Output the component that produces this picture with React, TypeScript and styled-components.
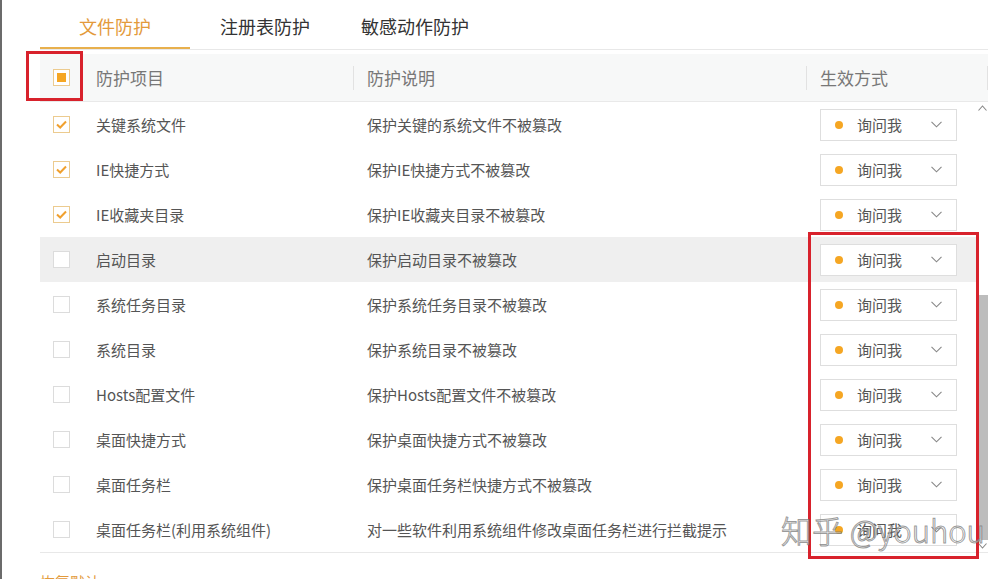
import React from "react";
import styled, { createGlobalStyle } from "styled-components";

const Global = createGlobalStyle`
  html, body { margin: 0; padding: 0; background: #fff; }
  body { font-family: "Noto Sans CJK SC", "Microsoft YaHei", "Noto Sans", sans-serif; }
  #root { width: 1007px; height: 579px; overflow: hidden; }
`;

const Frame = styled.div`
  position: relative;
  width: 1007px;
  height: 579px;
  box-sizing: border-box;
  border-left: 2px solid #6b6b6b;
  padding-left: 38px;
  overflow: hidden;
  background: #fff;
`;

const Panel = styled.div`
  width: 948px;
  display: flex;
  flex-direction: column;
`;

const TabBar = styled.div`
  display: flex;
  height: 49px;
  border-bottom: 1px solid #e8e8e8;
`;

const Tab = styled.div<{ $active?: boolean }>`
  width: 150px;
  height: 49px;
  box-sizing: border-box;
  display: flex;
  align-items: center;
  justify-content: center;
  padding-top: 4px;
  font-size: 18px;
  color: ${(p) => (p.$active ? "#e39a3b" : "#333")};
  border-bottom: 2px solid ${(p) => (p.$active ? "#e8b04d" : "transparent")};
`;

const Header = styled.div`
  margin-top: 4px;
  height: 47px;
  background: #f7f8f8;
  border-bottom: 1px solid #e9e9e9;
  display: grid;
  grid-template-columns: 313px 453px 182px;
  align-items: center;
`;

const HeadCell = styled.div<{ $sep?: boolean }>`
  display: flex;
  align-items: center;
  height: 24px;
  font-size: 17px;
  color: #777;
  padding-left: 13px;
  border-left: ${(p) => (p.$sep ? "1px solid #e2e2e2" : "none")};
  gap: 26px;
  &:last-child { border-right: 1px solid #e2e2e2; }
`;

const Body = styled.div`
  position: relative;
  height: 450px;
  border-bottom: 1px solid #e8e8e8;
  display: flex;
`;

const Rows = styled.div`
  width: 937px;
  display: flex;
  flex-direction: column;
`;

const Row = styled.div<{ $hover?: boolean }>`
  height: 45px;
  display: grid;
  grid-template-columns: 313px 453px 171px;
  align-items: center;
  background: ${(p) => (p.$hover ? "#efefef" : "transparent")};
  font-size: 15px;
  color: #555;
`;

const NameCell = styled.div`
  display: flex;
  align-items: center;
  padding-left: 13px;
  gap: 26px;
`;

const DescCell = styled.div`
  padding-left: 14px;
  white-space: nowrap;
`;

const ModeCell = styled.div`
  padding-left: 14px;
`;

const Box = styled.div<{ $checked?: boolean; $partial?: boolean }>`
  width: 17px;
  height: 17px;
  box-sizing: border-box;
  border: 1px solid ${(p) => (p.$checked || p.$partial ? "#eccb8f" : "#dcdcdc")};
  background: #fff;
  display: flex;
  align-items: center;
  justify-content: center;
  flex: none;
`;

const Inner = styled.div`
  width: 9px;
  height: 9px;
  background: #f5a623;
`;

const Select = styled.div`
  width: 137px;
  height: 32px;
  box-sizing: border-box;
  border: 1px solid #dedede;
  background: #fff;
  display: flex;
  align-items: center;
  padding-left: 14px;
  padding-right: 14px;
  font-size: 15px;
  color: #555;
`;

const Dot = styled.span`
  width: 8px;
  height: 8px;
  border-radius: 50%;
  background: #f5a623;
  margin-right: 14px;
  flex: none;
`;

const SelText = styled.span`
  flex: 1;
`;

const Scroll = styled.div`
  width: 11px;
  display: flex;
  flex-direction: column;
  align-items: center;
`;

const Track = styled.div`
  flex: 1;
  width: 11px;
  display: flex;
  flex-direction: column;
  justify-content: flex-end;
`;

const Thumb = styled.div`
  width: 11px;
  height: 245px;
  background: #bdbdbd;
`;

const Arrow = styled.div`
  height: 12px;
  display: flex;
  align-items: center;
  justify-content: center;
`;

const Footer = styled.div`
  margin-top: 18px;
  font-size: 15px;
  color: #e39a3b;
`;

const Mark = styled.div<{ $x: number; $y: number; $w: number; $h: number }>`
  position: absolute;
  left: ${(p) => p.$x}px;
  top: ${(p) => p.$y}px;
  width: ${(p) => p.$w}px;
  height: ${(p) => p.$h}px;
  box-sizing: border-box;
  border: 3px solid #d8222c;
  pointer-events: none;
`;

const Watermark = styled.div`
  position: absolute;
  left: 779px;
  top: 507px;
  font-size: 31px;
  font-family: "Noto Sans CJK SC", "Noto Sans", sans-serif;
  font-weight: 300;
  color: rgba(255, 255, 255, 0.55);
  -webkit-text-stroke: 1px rgba(110, 110, 110, 0.7);
  white-space: nowrap;
  pointer-events: none;
`;

const Check = () => (
  <svg width="11" height="9" viewBox="0 0 11 9">
    <path d="M1 4.5 L4.2 7.5 L10 1.5" fill="none" stroke="#f0a02e" strokeWidth="2" />
  </svg>
);

const Chevron = () => (
  <svg width="11" height="7" viewBox="0 0 11 7">
    <path d="M0.5 0.8 L5.5 5.8 L10.5 0.8" fill="none" stroke="#888" strokeWidth="1.1" />
  </svg>
);

const ArrowIcon = ({ up }: { up?: boolean }) => (
  <svg width="9" height="6" viewBox="0 0 9 6">
    <path d={up ? "M0.5 5.5 L4.5 1 L8.5 5.5" : "M0.5 0.5 L4.5 5 L8.5 0.5"} fill="none" stroke="#888" strokeWidth="1.1" />
  </svg>
);

const rows = [
  { name: "关键系统文件", desc: "保护关键的系统文件不被篡改", checked: true },
  { name: "IE快捷方式", desc: "保护IE快捷方式不被篡改", checked: true },
  { name: "IE收藏夹目录", desc: "保护IE收藏夹目录不被篡改", checked: true },
  { name: "启动目录", desc: "保护启动目录不被篡改", hover: true },
  { name: "系统任务目录", desc: "保护系统任务目录不被篡改" },
  { name: "系统目录", desc: "保护系统目录不被篡改" },
  { name: "Hosts配置文件", desc: "保护Hosts配置文件不被篡改" },
  { name: "桌面快捷方式", desc: "保护桌面快捷方式不被篡改" },
  { name: "桌面任务栏", desc: "保护桌面任务栏快捷方式不被篡改" },
  { name: "桌面任务栏(利用系统组件)", desc: "对一些软件利用系统组件修改桌面任务栏进行拦截提示" },
];

export default function App() {
  return (
    <>
      <Global />
      <Frame>
        <Panel>
          <TabBar>
            <Tab $active>文件防护</Tab>
            <Tab>注册表防护</Tab>
            <Tab>敏感动作防护</Tab>
          </TabBar>
          <Header>
            <HeadCell>
              <Box $partial>
                <Inner />
              </Box>
              防护项目
            </HeadCell>
            <HeadCell $sep>防护说明</HeadCell>
            <HeadCell $sep>生效方式</HeadCell>
          </Header>
          <Body>
            <Rows>
              {rows.map((r) => (
                <Row key={r.name} $hover={r.hover}>
                  <NameCell>
                    <Box $checked={r.checked}>{r.checked && <Check />}</Box>
                    {r.name}
                  </NameCell>
                  <DescCell>{r.desc}</DescCell>
                  <ModeCell>
                    <Select>
                      <Dot />
                      <SelText>询问我</SelText>
                      <Chevron />
                    </Select>
                  </ModeCell>
                </Row>
              ))}
            </Rows>
            <Scroll>
              <Arrow><ArrowIcon up /></Arrow>
              <Track>
                <Thumb />
              </Track>
              <Arrow><ArrowIcon /></Arrow>
            </Scroll>
          </Body>
          <Footer>恢复默认</Footer>
        </Panel>
        <Mark $x={24} $y={51} $w={57} $h={50} />
        <Mark $x={806} $y={232} $w={171} $h={327} />
        <Watermark>知乎 @youhou</Watermark>
      </Frame>
    </>
  );
}
